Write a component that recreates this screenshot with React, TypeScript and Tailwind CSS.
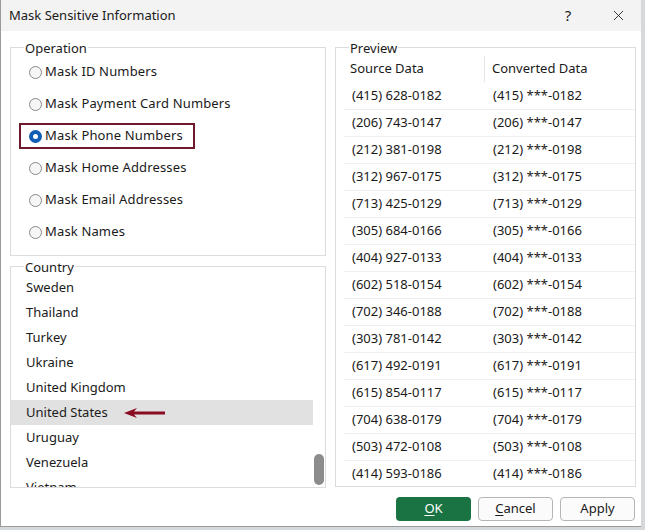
import { X } from "lucide-react";

const operations = [
  "Mask ID Numbers",
  "Mask Payment Card Numbers",
  "Mask Phone Numbers",
  "Mask Home Addresses",
  "Mask Email Addresses",
  "Mask Names",
];

const countries = [
  "Sweden",
  "Thailand",
  "Turkey",
  "Ukraine",
  "United Kingdom",
  "United States",
  "Uruguay",
  "Venezuela",
  "Vietnam",
];

const phones = [
  ["(415) 628-0182", "(415) ***-0182"],
  ["(206) 743-0147", "(206) ***-0147"],
  ["(212) 381-0198", "(212) ***-0198"],
  ["(312) 967-0175", "(312) ***-0175"],
  ["(713) 425-0129", "(713) ***-0129"],
  ["(305) 684-0166", "(305) ***-0166"],
  ["(404) 927-0133", "(404) ***-0133"],
  ["(602) 518-0154", "(602) ***-0154"],
  ["(702) 346-0188", "(702) ***-0188"],
  ["(303) 781-0142", "(303) ***-0142"],
  ["(617) 492-0191", "(617) ***-0191"],
  ["(615) 854-0117", "(615) ***-0117"],
  ["(704) 638-0179", "(704) ***-0179"],
  ["(503) 472-0108", "(503) ***-0108"],
  ["(414) 593-0186", "(414) ***-0186"],
];

const Radio = ({ checked }: { checked: boolean }) =>
  checked ? (
    <span className="w-[13px] h-[13px] rounded-full bg-[#0f5db5] flex items-center justify-center shrink-0">
      <span className="w-[5px] h-[5px] rounded-full bg-white"></span>
    </span>
  ) : (
    <span className="w-[13px] h-[13px] rounded-full border border-[#8a8a8a] bg-[#f6f6f6] shrink-0"></span>
  );

const Legend = ({ text }: { text: string }) => (
  <span className="absolute -top-[9px] left-[13px] px-[1px] bg-white text-[13px] leading-[18px] text-[#1a1a1a] z-10">
    {text}
  </span>
);

export default function App() {
  return (
    <div className="w-[645px] h-[530px] bg-[#d6d9dc] flex" style={{ fontFamily: '"Noto Sans", "Open Sans", sans-serif' }}>
      <div className="w-[641px] h-[527px] bg-white border-l border-b border-[#9a9a9a] flex flex-col">
        {/* Title bar */}
        <div className="h-[31px] bg-[#f3f3f3] flex items-center pl-[8px] shrink-0">
          <span className="text-[13px] text-[#1a1a1a] flex-1">Mask Sensitive Information</span>
          <span className="text-[15px] text-[#1a1a1a] w-[46px] text-center mr-[4px]">?</span>
          <span className="w-[46px] flex justify-center">
            <X size={17} strokeWidth={1.2} color="#1a1a1a" />
          </span>
        </div>

        <div className="flex gap-[9px] pl-[9px] pt-[16px]">
          {/* Left column */}
          <div className="flex flex-col gap-[10px] w-[316px]">
            <div className="relative border border-[#dcdcdc] h-[209px] pt-[8px] pl-[10px]">
              <Legend text="Operation" />
              <div className="flex flex-col">
                {operations.map((op, i) => (
                  <div key={op} className="h-[32px] flex items-center">
                    <div
                      className={`h-[26px] flex items-center gap-[3px] pl-[8px] pr-[10px] -ml-[2px] border-2 ${
                        i === 2 ? "border-[#6e1a2c]" : "border-transparent"
                      }`}
                    >
                      <Radio checked={i === 2} />
                      <span className="text-[13px] text-[#1a1a1a] tracking-[0.15px]">{op}</span>
                    </div>
                  </div>
                ))}
              </div>
            </div>

            <div className="relative border border-[#dcdcdc] h-[222px] flex">
              <Legend text="Country" />
              <div className="flex-1 pt-[8px] overflow-hidden">
                {countries.map((c) => (
                  <div
                    key={c}
                    className={`h-[25px] flex items-center pl-[15px] text-[13px] text-[#1a1a1a] ${
                      c === "United States" ? "bg-[#e1e1e1]" : ""
                    }`}
                  >
                    <span>{c}</span>
                    {c === "United States" && (
                      <svg width="42" height="10" viewBox="0 0 42 10" className="ml-[16px]">
                        <path d="M0 5 L13 0 L10 3.6 L41 3.6 L41 6.4 L10 6.4 L13 10 Z" fill="#8a0c22" />
                      </svg>
                    )}
                  </div>
                ))}
              </div>
              <div className="w-[12px] flex flex-col justify-end pb-[2px] items-center">
                <div className="w-[10px] h-[31px] rounded-[5px] bg-[#8c8c8c]"></div>
              </div>
            </div>
          </div>

          {/* Preview */}
          <div className="relative border border-[#dcdcdc] w-[301px] h-[440px] pt-[8px]">
            <Legend text="Preview" />
            <div className="h-full overflow-hidden">
              <div className="flex h-[26px] items-center text-[13px] text-[#1a1a1a]">
                <div className="w-[148px] pl-[14px]">Source Data</div>
                <div className="flex-1 pl-[7px] border-l border-[#e6e6e6] h-[26px] flex items-center">Converted Data</div>
              </div>
              {phones.map(([src, dst], i) => (
                <div
                  key={src}
                  className={`flex h-[27px] items-center text-[13px] text-[#1a1a1a] ml-[8px] ${
                    i > 0 ? "border-t border-[#f0f0f0]" : ""
                  }`}
                >
                  <div className="w-[140px] pl-[8px]">{src}</div>
                  <div className="flex-1 pl-[9px]">{dst}</div>
                </div>
              ))}
            </div>
          </div>
        </div>

        {/* Buttons */}
        <div className="flex justify-end gap-[7px] pr-[6px] pt-[9px]">
          <button className="w-[75px] h-[24px] rounded-[4px] bg-[#1a7343] text-white text-[13px]">
            <span className="underline underline-offset-2">O</span>K
          </button>
          <button className="w-[75px] h-[24px] rounded-[4px] border border-[#b5b5b5] bg-[#fbfbfb] text-[13px] text-[#1a1a1a]">
            <span className="underline underline-offset-2">C</span>ancel
          </button>
          <button className="w-[75px] h-[24px] rounded-[4px] border border-[#b5b5b5] bg-[#fbfbfb] text-[13px] text-[#1a1a1a]">
            Apply
          </button>
        </div>
      </div>
    </div>
  );
}
